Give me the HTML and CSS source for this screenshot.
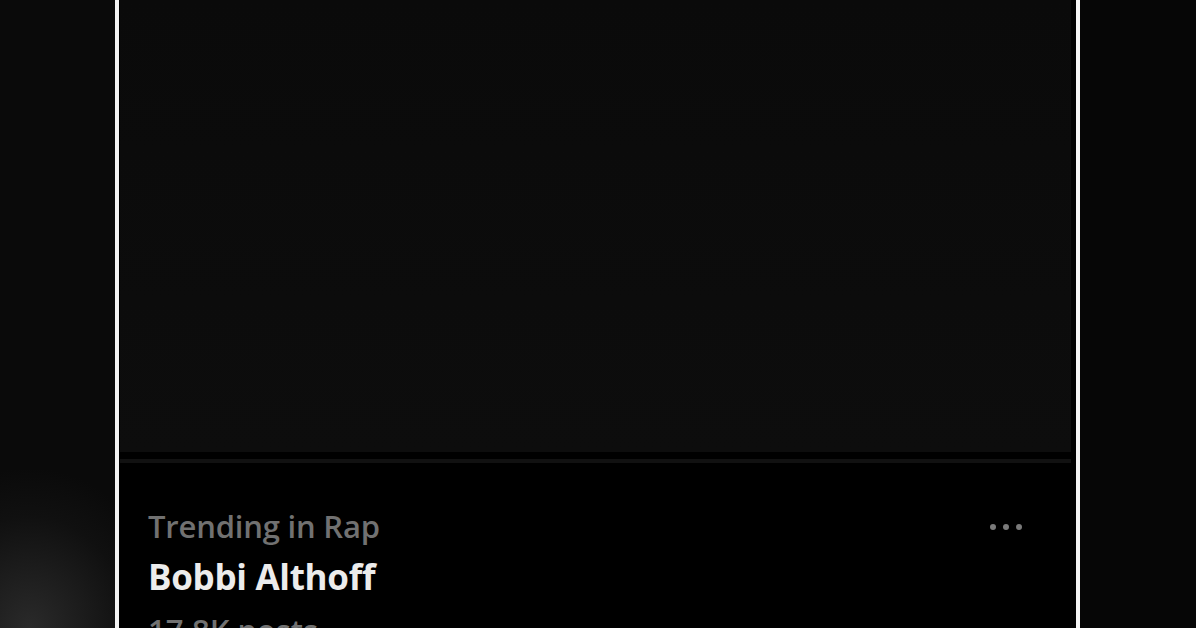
FILE: index.html
```html
<!DOCTYPE html>
<html lang="en">
<head>
  <meta charset="UTF-8">
  <title>Trending in Rap</title>
  <link rel="stylesheet" href="styles.css">
</head>
<body>

  <div class="stage">
    <div class="side side-left"></div>

    <div class="frame">
      <div class="media"></div>
      <div class="rule"></div>

      <div class="trend">
        <div class="trend-text">
          <div class="trend-label">Trending in Rap</div>
          <div class="trend-name">Bobbi Althoff</div>
          <div class="trend-count">17.8K posts</div>
        </div>
        <div class="more">
          <span class="dot"></span>
          <span class="dot"></span>
          <span class="dot"></span>
        </div>
      </div>
    </div>

    <div class="side side-right"></div>
  </div>

</body>
</html>
```

FILE: styles.css
```css
body {
  margin: 0;
  background: #050505;
  font-family: "Open Sans", Arial, sans-serif;
  overflow: hidden;
}

.stage {
  display: flex;
  height: 628px;
}

.side {
  flex: none;
}

.side-left {
  width: 115px;
  background: radial-gradient(ellipse 140px 160px at 30px 628px, #2a2a2a, #101010 70%, #0a0a0a);
}

.side-right {
  flex: 1;
  background: #060606;
}

.frame {
  flex: none;
  width: 951px;
  border-left: 4px solid #f4f4f4;
  border-right: 4px solid #f4f4f4;
  padding: 0 5px 0 1px;
  background: #000;
  display: flex;
  flex-direction: column;
}

.media {
  flex: none;
  height: 452px;
  background: linear-gradient(#0a0a0a, #0d0d0d);
}

.rule {
  flex: none;
  height: 4px;
  margin-top: 7px;
  background: #111;
}

.trend {
  display: flex;
  justify-content: space-between;
  padding: 43px 49px 0 28px;
}

.trend-label {
  font-size: 31px;
  font-weight: 600;
  color: #717171;
  line-height: 40px;
  letter-spacing: -0.2px;
}

.trend-name {
  font-size: 35px;
  font-weight: 700;
  color: #ececec;
  line-height: 50px;
  margin-top: 6px;
  letter-spacing: -0.3px;
}

.trend-count {
  font-size: 31px;
  font-weight: 600;
  color: #717171;
  line-height: 40px;
  margin-top: 8px;
}

.more {
  display: flex;
  gap: 7px;
  padding-top: 18px;
}

.dot {
  width: 6px;
  height: 6px;
  border-radius: 50%;
  background: #7a7a7a;
}
```
